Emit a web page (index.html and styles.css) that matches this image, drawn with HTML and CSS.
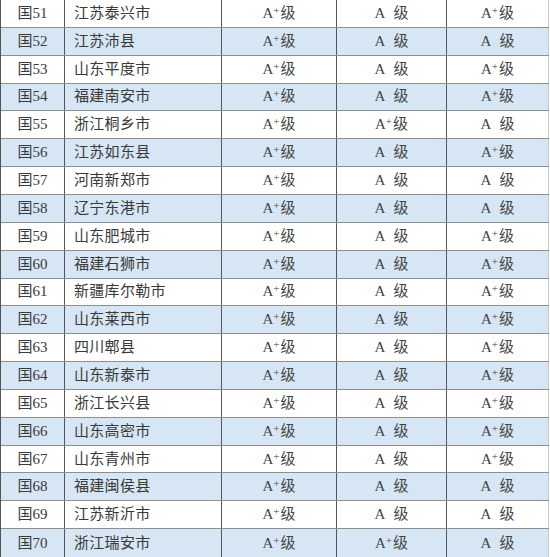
FILE: index.html
```html
<!DOCTYPE html>
<html lang="zh">
<head>
<meta charset="utf-8">
<link rel="stylesheet" href="styles.css">
</head>
<body>
<div class="table">
  <div class="row"><div class="c id">国51</div><div class="c name">江苏泰兴市</div><div class="c g">A<sup>+</sup>级</div><div class="c g">A<span class="sp"></span>级</div><div class="c g last">A<sup>+</sup>级</div></div>
  <div class="row alt"><div class="c id">国52</div><div class="c name">江苏沛县</div><div class="c g">A<sup>+</sup>级</div><div class="c g">A<span class="sp"></span>级</div><div class="c g last">A<span class="sp"></span>级</div></div>
  <div class="row"><div class="c id">国53</div><div class="c name">山东平度市</div><div class="c g">A<sup>+</sup>级</div><div class="c g">A<span class="sp"></span>级</div><div class="c g last">A<sup>+</sup>级</div></div>
  <div class="row alt"><div class="c id">国54</div><div class="c name">福建南安市</div><div class="c g">A<sup>+</sup>级</div><div class="c g">A<span class="sp"></span>级</div><div class="c g last">A<sup>+</sup>级</div></div>
  <div class="row"><div class="c id">国55</div><div class="c name">浙江桐乡市</div><div class="c g">A<sup>+</sup>级</div><div class="c g">A<sup>+</sup>级</div><div class="c g last">A<span class="sp"></span>级</div></div>
  <div class="row alt"><div class="c id">国56</div><div class="c name">江苏如东县</div><div class="c g">A<sup>+</sup>级</div><div class="c g">A<span class="sp"></span>级</div><div class="c g last">A<sup>+</sup>级</div></div>
  <div class="row"><div class="c id">国57</div><div class="c name">河南新郑市</div><div class="c g">A<sup>+</sup>级</div><div class="c g">A<span class="sp"></span>级</div><div class="c g last">A<span class="sp"></span>级</div></div>
  <div class="row alt"><div class="c id">国58</div><div class="c name">辽宁东港市</div><div class="c g">A<sup>+</sup>级</div><div class="c g">A<span class="sp"></span>级</div><div class="c g last">A<span class="sp"></span>级</div></div>
  <div class="row"><div class="c id">国59</div><div class="c name">山东肥城市</div><div class="c g">A<sup>+</sup>级</div><div class="c g">A<span class="sp"></span>级</div><div class="c g last">A<sup>+</sup>级</div></div>
  <div class="row alt"><div class="c id">国60</div><div class="c name">福建石狮市</div><div class="c g">A<sup>+</sup>级</div><div class="c g">A<span class="sp"></span>级</div><div class="c g last">A<sup>+</sup>级</div></div>
  <div class="row"><div class="c id">国61</div><div class="c name">新疆库尔勒市</div><div class="c g">A<sup>+</sup>级</div><div class="c g">A<span class="sp"></span>级</div><div class="c g last">A<sup>+</sup>级</div></div>
  <div class="row alt"><div class="c id">国62</div><div class="c name">山东莱西市</div><div class="c g">A<sup>+</sup>级</div><div class="c g">A<span class="sp"></span>级</div><div class="c g last">A<sup>+</sup>级</div></div>
  <div class="row"><div class="c id">国63</div><div class="c name">四川郫县</div><div class="c g">A<sup>+</sup>级</div><div class="c g">A<span class="sp"></span>级</div><div class="c g last">A<sup>+</sup>级</div></div>
  <div class="row alt"><div class="c id">国64</div><div class="c name">山东新泰市</div><div class="c g">A<sup>+</sup>级</div><div class="c g">A<span class="sp"></span>级</div><div class="c g last">A<sup>+</sup>级</div></div>
  <div class="row"><div class="c id">国65</div><div class="c name">浙江长兴县</div><div class="c g">A<sup>+</sup>级</div><div class="c g">A<span class="sp"></span>级</div><div class="c g last">A<sup>+</sup>级</div></div>
  <div class="row alt"><div class="c id">国66</div><div class="c name">山东高密市</div><div class="c g">A<sup>+</sup>级</div><div class="c g">A<span class="sp"></span>级</div><div class="c g last">A<sup>+</sup>级</div></div>
  <div class="row"><div class="c id">国67</div><div class="c name">山东青州市</div><div class="c g">A<sup>+</sup>级</div><div class="c g">A<span class="sp"></span>级</div><div class="c g last">A<sup>+</sup>级</div></div>
  <div class="row alt"><div class="c id">国68</div><div class="c name">福建闽侯县</div><div class="c g">A<sup>+</sup>级</div><div class="c g">A<span class="sp"></span>级</div><div class="c g last">A<span class="sp"></span>级</div></div>
  <div class="row"><div class="c id">国69</div><div class="c name">江苏新沂市</div><div class="c g">A<sup>+</sup>级</div><div class="c g">A<span class="sp"></span>级</div><div class="c g last">A<span class="sp"></span>级</div></div>
  <div class="row alt end"><div class="c id">国70</div><div class="c name">浙江瑞安市</div><div class="c g">A<sup>+</sup>级</div><div class="c g">A<sup>+</sup>级</div><div class="c g last">A<span class="sp"></span>级</div></div>
</div>
</body>
</html>
```
FILE: styles.css
```css
html, body {
  margin: 0;
  padding: 0;
  background: #ffffff;
}
.table {
  width: 549px;
  height: 557px;
  display: grid;
  grid-template-rows: repeat(20, 1fr);
  border-left: 1px solid #555;
  box-sizing: border-box;
  font-family: "Liberation Serif", "Noto Sans CJK SC", serif;
  font-size: 15px;
  color: #3a3a3a;
}
.row {
  display: grid;
  grid-template-columns: 64px 157px 115px 110px 102px;
  border-bottom: 1px solid #8e8e8e;
  background: #ffffff;
}
.row.alt {
  background: #d6e6f4;
}
.row.end {
  border-bottom: none;
}
.c {
  display: flex;
  align-items: center;
  justify-content: center;
  border-right: 1px solid #555;
  white-space: nowrap;
  line-height: 1;
}
.c.last {
  border-right-color: #c8c8c8;
}
.c.name {
  justify-content: flex-start;
  padding-left: 9px;
  letter-spacing: 0.3px;
}
.g {
  color: #444;
}
.g sup {
  display: inline-block;
  font-size: 11px;
  line-height: 1;
  vertical-align: top;
  position: relative;
  top: -3px;
  margin: 0 1px 0 0;
}
.sp {
  display: inline-block;
  width: 8px;
}
```
